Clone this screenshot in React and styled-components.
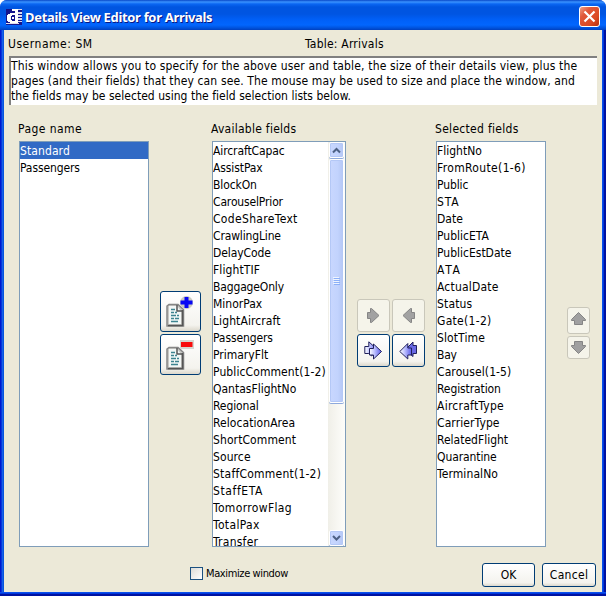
import React from "react";
import styled, { createGlobalStyle, css } from "styled-components";

const Global = createGlobalStyle`
  * { box-sizing: border-box; }
  body { margin: 0; background: #fff; overflow: hidden; }
  button { font: inherit; padding: 0; margin: 0; }
`;

const Window = styled.div`
  width: 606px;
  height: 596px;
  display: flex;
  flex-direction: column;
  font: 12px/15px "DejaVu Sans Condensed", "DejaVu Sans", sans-serif;
  font-stretch: condensed;
  color: #000;
  background: #0a50e8;
  border-radius: 7px 7px 0 0;
  overflow: hidden;
`;

const TitleBar = styled.header`
  height: 30px;
  flex: none;
  display: flex;
  align-items: center;
  padding: 3px 6px 0 6px;
  background: linear-gradient(#0848c8 0, #3a93ff 2px, #0a66f2 4px, #0055e0 7px, #0055e2 14px, #0060f8 20px, #0266fe 25px, #0052dc 28px, #003fbf 30px);
`;

const Title = styled.h1`
  flex: 1;
  margin: 0 0 0 3px;
  font: bold 13px/18px "Noto Sans", sans-serif;
  letter-spacing: -0.32px;
  color: #fff;
  text-shadow: 1px 1px 0 #0a1883;
  white-space: nowrap;
`;

const CloseButton = styled.button`
  width: 21px;
  height: 21px;
  display: grid;
  place-items: center;
  border: 1px solid #fff;
  border-radius: 3px;
  background: linear-gradient(135deg, #f0a088 0, #e0583a 30%, #dc4a24 70%, #b8300c 100%);
`;

const Frame = styled.main`
  flex: 1;
  display: flex;
  flex-direction: column;
  padding: 0 4px 4px;
  background:
    linear-gradient(#0a50ec 0 1px, #0038dc 1px 2px, #0012a0 2px) bottom / 100% 4px no-repeat,
    linear-gradient(90deg, #0019cf 0 1px, #0838da 1px 2px, #1660e8 2px 3px, #0855dd 3px 4px) left / 4px 100% no-repeat,
    linear-gradient(90deg, #0850e8 0 1px, #0038dc 1px 2px, #0012a0 2px) right / 4px 100% no-repeat;
`;

const Content = styled.div`
  flex: 1;
  display: flex;
  flex-direction: column;
  background: #ece9d8;
  padding-left: 4px;
`;

const Info = styled.div`
  display: grid;
  grid-template-columns: 297px 1fr;
  height: 26px;
  padding-top: 7px;
`;

const Text = styled.span`
  white-space: nowrap;
  letter-spacing: ${(p) => p.$track || 0}px;
`;

const Description = styled.div`
  width: 588px;
  height: 49px;
  margin-left: 1px;
  padding-top: 1px;
  background: #fff;
  border: solid #808080;
  border-width: 2px 0 0 2px;
  box-shadow: inset 0 0 0 0 #fff;
  display: flex;
  flex-direction: column;
`;

const Columns = styled.section`
  display: grid;
  grid-template-columns: 130px 63px 134px 90px 110px 1fr;
  padding: 17px 0 0 11px;
  height: 442px;
`;

const Field = styled.div`
  display: flex;
  flex-direction: column;
`;

const Label = styled.div`
  height: 19px;
  margin-left: -1px;
  white-space: nowrap;
  letter-spacing: ${(p) => p.$track || 0}px;
`;

const List = styled.div`
  height: 406px;
  border: 1px solid #7f9db9;
  background: #fff;
  display: flex;
  overflow: hidden;
`;

const Options = styled.ul`
  flex: 1;
  min-width: 0;
  list-style: none;
  margin: 0;
  padding: 0;
`;

const Option = styled.li`
  height: 17px;
  line-height: 19px;
  white-space: nowrap;
  letter-spacing: ${(p) => p.$track || 0}px;
  ${(p) => p.$selected && css`background: #316ac5; color: #fff;`}
`;

const Scrollbar = styled.div`
  width: 17px;
  display: flex;
  flex-direction: column;
  background: linear-gradient(90deg, #f0efe8, #fdfdfa);
  padding: 0 1px;
`;

const ScrollPart = styled.div`
  height: ${(p) => p.$h}px;
  margin-bottom: ${(p) => p.$gap || 0}px;
  flex: none;
  display: grid;
  place-items: center;
  border: 1px solid #fff;
  border-radius: 2px;
  box-shadow: inset 0 0 0 1px #b4c8f6, 0 1px 0 #8ea9dc;
  background: linear-gradient(90deg, #c9d7fe, #c2d3fd 60%, #b4c6f4);
`;

const Track = styled.div`
  flex: 1;
`;

const Stack = styled.div`
  display: flex;
  flex-direction: column;
  gap: 2px;
  padding: ${(p) => p.$pad};
`;

const Movers = styled.div`
  display: grid;
  grid-template-columns: 33px 33px;
  grid-auto-rows: 33px;
  align-content: start;
  gap: 2px;
  padding: 177px 0 0 11px;
`;

const Button = styled.button`
  width: ${(p) => p.$w}px;
  height: ${(p) => p.$h}px;
  display: grid;
  place-items: center;
  padding-bottom: ${(p) => p.$lift || 0}px;
  color: #000;
  border: 1px solid #003c74;
  border-radius: 3px;
  background: linear-gradient(#fff, #f4f3ee 85%, #dcd8cc);
  ${(p) => p.$off && css`border-color: #c9c7ba; background: #f5f4ea;`}
`;

const Footer = styled.footer`
  display: flex;
  align-items: flex-start;
  padding: 16px 6px 0 182px;
`;

const CheckLabel = styled.label`
  flex: 1;
  display: flex;
  align-items: center;
  gap: 3px;
  margin-top: 3px;
  font-size: 11px;
  letter-spacing: -0.38px;
`;

const CheckBox = styled.span`
  width: 13px;
  height: 13px;
  border: 1px solid #1c5180;
  background: linear-gradient(135deg, #dcdcd7, #fff);
`;

const Actions = styled.div`
  display: flex;
  gap: 7px;
`;

const Svg = styled.svg`
  display: block;
`;

function AppLogo() {
  return (
    <Svg width="16" height="16" viewBox="0 0 16 16" shapeRendering="crispEdges">
      <path fill="#14148c" d="M0 0h16v16H0z" />
      <path fill="#fff" d="M6 0h6v2H6zM4 4h8v2H4zM2 5h4v2H2zM1 6h4v6H1zM2 11h4v2H2zM4 12h8v2H4zM9 2h3v12H9zM6 8h2v2H6z" />
      <path fill="#dcdcec" d="M12 0h4v1h-4zM12 3h4v2h-4zM12 6h4v2h-4zM12 9h4v2h-4zM12 12h4v1h-4zM0 14h13v1H0z" />
    </Svg>
  );
}

function DocIcon({ remove }) {
  return (
    <Svg width="33" height="35" viewBox="0 0 33 35">
      <path d="M5 10.500h9l5.500 5V32H3V12z" fill="#c8c8c4" stroke="#858585" strokeWidth="1.500" />
      <path d="M5 12v18h12V17l-4-5z" fill="#f3f7f6" />
      <path d="M13 11v6h5.500M18.500 16v15.500H4" fill="none" stroke="#555" strokeWidth="1.500" />
      <path d="M7 15.5h4M7 18.5h3m1 0h2M7 21.5h5m1 0h2M7 24.5h3m1 0h4M7 27.5h7" stroke="#3d8490" strokeWidth="1.300" />
      {remove ? (
        <>
          <path d="M16 3h14v9H16z" fill="#d6d6d0" />
          <path d="M17 5h11.500v5H17z" fill="#f80c0c" />
        </>
      ) : (
        <>
          <circle cx="22.5" cy="8.500" r="6.500" fill="#c9c9c2" />
          <path d="M20.500 3h4v3.500h4v4h-4V14h-4v-3.500h-4v-4h4z" fill="#0808f4" />
        </>
      )}
    </Svg>
  );
}

function GrayArrow({ back }) {
  return (
    <Svg width="13" height="17" viewBox="0 0 13 17">
      <path
        d={back ? "M12.500 5.500h-3v-4h-1l-7.500 7 7.500 7h1v-4h3z" : "M.5 5.500h3v-4h1l7.500 7-7.500 7h-1v-4h-3z"}
        fill="#a2a2a2"
        stroke="#858585"
      />
    </Svg>
  );
}

function WideArrow({ down }) {
  return (
    <Svg width="17" height="13" viewBox="0 0 17 13">
      <path
        d={down ? "M4.500.5h8v4h3v1l-7 7-7-7v-1h3z" : "M4.500 12.500h8v-4h3v-1l-7-7-7 7v1h3z"}
        fill="#a0a0a0"
        stroke="#858585"
      />
    </Svg>
  );
}

function DoubleArrow({ back }) {
  const id = back ? "fill-left" : "fill-right";
  return (
    <Svg width="19" height="19" viewBox="0 0 19 19">
      <defs>
        <linearGradient id={id} x1="0" x2="1">
          <stop offset="0" stopColor="#fff" />
          <stop offset=".35" stopColor="#c8ccff" />
          <stop offset="1" stopColor="#5c5cec" />
        </linearGradient>
      </defs>
      <g stroke="#20205c" fill={`url(#${id})`}>
        {back ? (
          <>
            <path d="M6 9l8-8v3.500h3.500v8H14v3z" fill="#6868e4" />
            <path d="M.8 10.500l8-8V7h3.700v7H8.800v4z" />
          </>
        ) : (
          <>
            <path d="M.8 5.500h4V.8l8 7.200-5 7-3-2.500h-4z" />
            <path d="M5.500 7.500h4V3l8 7.500-8 7.500v-4h-4z" />
          </>
        )}
      </g>
    </Svg>
  );
}

function Chevron({ down }) {
  return (
    <Svg width="9" height="7" viewBox="0 0 9 7">
      <path d={down ? "M1 1l3.5 3.5L8 1" : "M1 5.5L4.500 2 8 5.500"} fill="none" stroke="#4d6185" strokeWidth="2" />
    </Svg>
  );
}

// Each entry: field name, letter spacing in px.
const pages = [["Standard", 0.1], ["Passengers", -0.1]];

const available = [
  ["AircraftCapac", -0.1], ["AssistPax", -0.1], ["BlockOn", -0.1], ["CarouselPrior", -0.15],
  ["CodeShareText", 0.33], ["CrawlingLine", -0.15], ["DelayCode", -0.1], ["FlightTIF", 0.1],
  ["BaggageOnly", -0.15], ["MinorPax"], ["LightAircraft", 0.1], ["Passengers", -0.1],
  ["PrimaryFlt"], ["PublicComment(1-2)", 0.1], ["QantasFlightNo"], ["Regional", -0.1],
  ["RelocationArea", 0.07], ["ShortComment", 0.1], ["Source", 0.1], ["StaffComment(1-2)", 0.23],
  ["StaffETA", 0.6], ["TomorrowFlag", 0.35], ["TotalPax", 0.35], ["Transfer", 0.25],
];

const selected = [
  ["FlightNo"], ["FromRoute(1-6)", 0.35], ["Public", -0.1], ["STA", 0.9], ["Date"],
  ["PublicETA"], ["PublicEstDate"], ["ATA", 1.7], ["ActualDate", 0.2], ["Status", 0.15],
  ["Gate(1-2)", 0.3], ["SlotTime", 0.1], ["Bay", -0.2], ["Carousel(1-5)", 0.1],
  ["Registration", -0.1], ["AircraftType", 0.25], ["CarrierType", 0.1], ["RelatedFlight"],
  ["Quarantine", -0.1], ["TerminalNo", 0.1],
];

function OptionList({ items, active }) {
  return (
    <Options>
      {items.map(([name, track]) => (
        <Option key={name} $track={track} $selected={name === active}>{name}</Option>
      ))}
    </Options>
  );
}

export default function App() {
  return (
    <Window>
      <Global />
      <TitleBar>
        <AppLogo />
        <Title>Details View Editor for Arrivals</Title>
        <CloseButton aria-label="Close">
          <Svg width="13" height="13" viewBox="0 0 13 13">
            <path d="M1.500 1.500l10 10M11.500 1.500l-10 10" stroke="#fff" strokeWidth="2.2" />
          </Svg>
        </CloseButton>
      </TitleBar>
      <Frame>
        <Content>
          <Info>
            <Text $track={0.53}>Username: SM</Text>
            <Text $track={0.22}>Table: Arrivals</Text>
          </Info>
          <Description>
            <Text $track={0.163}>This window allows you to specify for the above user and table, the size of their details view, plus the</Text>
            <Text $track={0.13}>pages (and their fields) that they can see. The mouse may be used to size and place the window, and</Text>
            <Text $track={0.03}>the fields may be selected using the field selection lists below.</Text>
          </Description>
          <Columns>
            <Field>
              <Label $track={0.43}>Page name</Label>
              <List><OptionList items={pages} active="Standard" /></List>
            </Field>
            <Stack $pad="169px 0 0 11px">
              <Button $w={41} $h={41} aria-label="Add page"><DocIcon /></Button>
              <Button $w={41} $h={41} aria-label="Remove page"><DocIcon remove /></Button>
            </Stack>
            <Field>
              <Label $track={0.26}>Available fields</Label>
              <List>
                <OptionList items={available} />
                <Scrollbar>
                  <ScrollPart $h={16} $gap={1}><Chevron /></ScrollPart>
                  <ScrollPart $h={244}>
                    <Svg width="7" height="8" viewBox="0 0 7 8" shapeRendering="crispEdges">
                      <path d="M0 0h6v1H0zM0 2h6v1H0zM0 4h6v1H0zM0 6h6v1H0z" fill="#eef4fe" />
                      <path d="M1 1h6v1H1zM1 3h6v1H1zM1 5h6v1H1zM1 7h6v1H1z" fill="#8cb0f8" />
                    </Svg>
                  </ScrollPart>
                  <Track />
                  <ScrollPart $h={16}><Chevron down /></ScrollPart>
                </Scrollbar>
              </List>
            </Field>
            <Movers>
              <Button $off $w={33} $h={33} aria-label="Add field"><GrayArrow /></Button>
              <Button $off $w={33} $h={33} aria-label="Remove field"><GrayArrow back /></Button>
              <Button $w={33} $h={33} aria-label="Add all fields"><DoubleArrow /></Button>
              <Button $w={33} $h={33} aria-label="Remove all fields"><DoubleArrow back /></Button>
            </Movers>
            <Field>
              <Label $track={0.3}>Selected fields</Label>
              <List><OptionList items={selected} /></List>
            </Field>
            <Stack $pad="185px 0 0 21px">
              <Button $off $w={23} $h={27} $lift={4} aria-label="Move up"><WideArrow /></Button>
              <Button $off $w={23} $h={23} $lift={1} aria-label="Move down"><WideArrow down /></Button>
            </Stack>
          </Columns>
          <Footer>
            <CheckLabel><CheckBox />Maximize window</CheckLabel>
            <Actions>
              <Button $w={53} $h={24}><Text>OK</Text></Button>
              <Button $w={54} $h={24}><Text $track={0.3}>Cancel</Text></Button>
            </Actions>
          </Footer>
        </Content>
      </Frame>
    </Window>
  );
}
